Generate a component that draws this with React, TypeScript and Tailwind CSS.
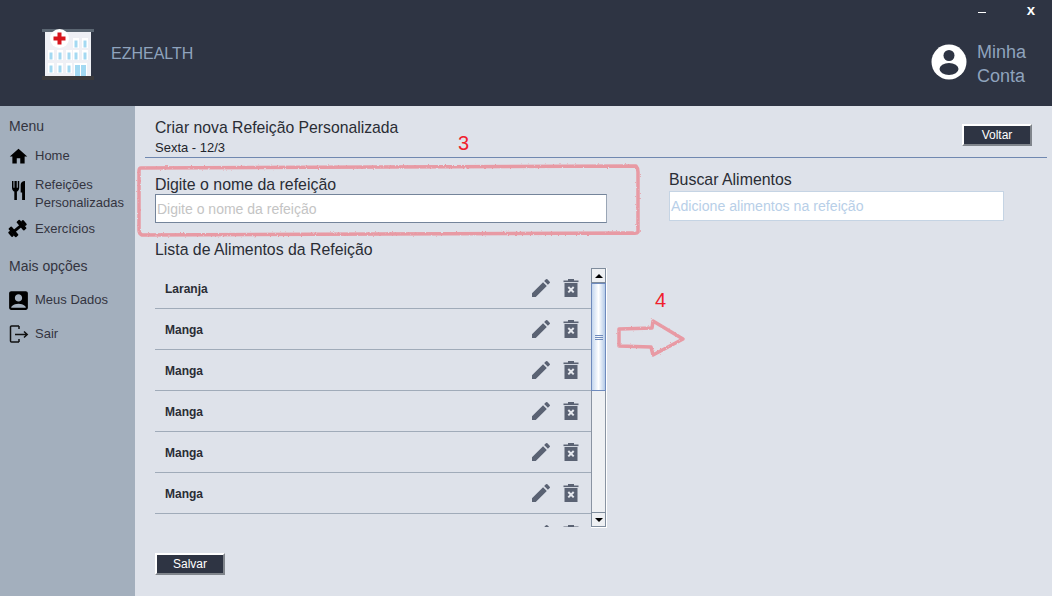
import { MdHome, MdEdit, MdAccountBox } from 'react-icons/md';

const ITEMS = ['Laranja', 'Manga', 'Manga', 'Manga', 'Manga', 'Manga', ''];

function HospitalLogo() {
  const windows = [
    [31, 10], [40, 10],
    [6, 22], [15, 22], [24, 22], [31, 22], [40, 22],
    [6, 35], [15, 35], [24, 35],
  ];
  return (
    <svg width="52" height="52" viewBox="0 0 52 52" className="shrink-0">
      <rect x="3" y="3" width="46" height="45" fill="#eff0f5" />
      <rect x="0" y="1" width="52" height="3" fill="#5b6672" />
      <rect x="0" y="48" width="52" height="4" fill="#3b3a3c" />
      {windows.map(([x, y], i) => (
        <g key={i}>
          <rect x={x} y={y} width="6" height="10" fill="#ffffff" />
          <rect x={x + 1.5} y={y + 2.5} width="3" height="7" fill="#a3d9f2" />
        </g>
      ))}
      <rect x="32" y="35" width="13" height="13" fill="#ffffff" />
      <rect x="33" y="37" width="11" height="11" fill="#a3d9f2" />
      <rect x="38" y="37" width="1" height="11" fill="#ffffff" />
      <circle cx="17.5" cy="10.5" r="9.5" fill="#ffffff" />
      <rect x="15.5" y="4.5" width="4" height="12" fill="#d8141c" />
      <rect x="11.5" y="8.5" width="12" height="4" fill="#d8141c" />
    </svg>
  );
}

function TrashX() {
  return (
    <svg width="16" height="18" viewBox="0 0 16 18" className="shrink-0">
      <rect x="0.5" y="1.5" width="15" height="1.6" fill="#5a6273" />
      <rect x="5" y="0" width="6" height="2" fill="#5a6273" />
      <path d="M1.5 4h13v14h-13z" fill="#5a6273" />
      <path d="M5.3 8l5.4 5.4M10.7 8l-5.4 5.4" stroke="#e6e9ef" strokeWidth="2" />
    </svg>
  );
}

function LogoutIcon() {
  return (
    <svg width="20" height="20" viewBox="0 0 20 20" fill="none" stroke="#111" strokeWidth="1.5" className="shrink-0">
      <path d="M10 2H2.5a1 1 0 0 0-1 1v14a1 1 0 0 0 1 1H10" />
      <path d="M10 2v3M10 15v3" />
      <path d="M6 10.5h12M15 7.5l3.2 3-3.2 3" />
    </svg>
  );
}

function ForkKnife() {
  return (
    <svg width="13" height="19" viewBox="3 2 18 20" preserveAspectRatio="none" className="-translate-y-[4px] shrink-0">
      <path
        d="M11 9H9.6V2H6.4v7H5V2H3v7c0 2.12 1.66 3.84 3.2 3.97V22h3.6v-9.03C11.34 12.84 13 11.12 13 9V2h-2v7zm4 -3v8h2v8H21V2c-3.3 0-6 1.8-6 4z"
        fill="#000"
      />
    </svg>
  );
}

function Dumbbell() {
  return (
    <svg width="21" height="21" viewBox="0 0 20 20" fill="#000" className="shrink-0 -translate-x-[1px] -translate-y-[1px]">
      <g transform="rotate(-40 10 10)">
        <rect x="0.5" y="7" width="3" height="6" rx="1" />
        <rect x="3" y="4.5" width="4" height="11" rx="1" />
        <rect x="6" y="8.6" width="8" height="2.8" />
        <rect x="13" y="4.5" width="4" height="11" rx="1" />
        <rect x="16.5" y="7" width="3" height="6" rx="1" />
      </g>
    </svg>
  );
}

function BevelButton({ label }: { label: string }) {
  return (
    <button className="w-[70px] h-[22px] bg-[#2e3443] border-2 border-t-white border-l-white border-r-[#80858c] border-b-[#80858c] text-white text-xs">
      {label}
    </button>
  );
}

function SideItem({ icon, children }: { icon: React.ReactNode; children: React.ReactNode }) {
  return (
    <div className="flex items-center gap-[7px] pl-[9px]">
      <div className="w-[19px] h-[18px] flex items-center justify-center shrink-0">{icon}</div>
      <span className="text-[13px] leading-[18px] text-[#33343f]">{children}</span>
    </div>
  );
}

function Scrollbar() {
  return (
    <div className="w-4 h-[260px] flex flex-col shrink-0 bg-[#eef0f3] border-r border-b border-white">
      <div className="h-[15px] border border-[#7f8c9c] bg-[#eef0f3] flex items-center justify-center">
        <div className="w-0 h-0 border-x-[4px] border-x-transparent border-b-[4px] border-b-black" />
      </div>
      <div className="h-[108px] border border-[#6f8bbd] bg-gradient-to-r from-[#c4d6ee] via-white to-[#b5cbe8] flex flex-col items-center justify-center gap-[1px]">
        <div className="w-2 h-px bg-[#6f8bbd]" />
        <div className="w-2 h-px bg-[#6f8bbd]" />
        <div className="w-2 h-px bg-[#6f8bbd]" />
      </div>
      <div className="flex-1 border-x border-[#8a94a2]" />
      <div className="h-[15px] border border-[#7f8c9c] bg-[#eef0f3] flex items-center justify-center">
        <div className="w-0 h-0 border-x-[4px] border-x-transparent border-t-[4px] border-t-black" />
      </div>
    </div>
  );
}

export default function App() {
  return (
    <div className="w-[1052px] h-[596px] overflow-hidden relative flex flex-col bg-[#dee2ea] font-['Liberation_Sans',Arial,sans-serif]">
      {/* Header */}
      <header className="h-[106px] bg-[#2e3443] shrink-0 flex flex-col">
        <div className="h-[20px] flex justify-end items-start text-white">
          <div className="w-2 h-px bg-white mt-3 mr-[41px]" />
          <span className="font-bold text-[15px] leading-[20px] mr-[17px]">x</span>
        </div>
        <div className="flex-1 flex items-start pl-[42px] pt-[8px]">
          <HospitalLogo />
          <span className="ml-[17px] mt-[16px] text-base leading-[20px] text-[#8fa3bd]">EZHEALTH</span>
          <div className="ml-auto mr-[26px] flex items-center gap-[10px] mt-[12px]">
            <svg width="36" height="36" viewBox="0 0 36 36" className="-mt-[4px]">
              <circle cx="18" cy="18" r="17.5" fill="#ffffff" />
              <circle cx="18" cy="11.5" r="5.5" fill="#2e3443" />
              <ellipse cx="18" cy="25" rx="9.5" ry="6" fill="#2e3443" />
            </svg>
            <span className="text-lg leading-6 text-[#8fa3bd]">Minha<br />Conta</span>
          </div>
        </div>
      </header>

      <div className="flex-1 flex min-h-0">
        {/* Sidebar */}
        <aside className="w-[135px] shrink-0 bg-[#a3afbd] pt-[12px]">
          <p className="pl-[9px] text-sm leading-4 text-[#33343f]">Menu</p>
          <div className="mt-[13px]"><SideItem icon={<MdHome size={21} color="#000" className="shrink-0" />}>Home</SideItem></div>
          <div className="mt-[11px]"><SideItem icon={<ForkKnife />}>Refeições<br />Personalizadas</SideItem></div>
          <div className="mt-[8px]"><SideItem icon={<Dumbbell />}>Exercícios</SideItem></div>
          <p className="pl-[9px] mt-[20px] text-sm leading-4 text-[#33343f]">Mais opções</p>
          <div className="mt-[17px]"><SideItem icon={<MdAccountBox size={25} color="#000" className="shrink-0" />}>Meus Dados</SideItem></div>
          <div className="mt-[16px]"><SideItem icon={<LogoutIcon />}>Sair</SideItem></div>
        </aside>

        {/* Main */}
        <main className="flex-1 min-w-0 pl-[10px] pr-[5px]">
          <div className="h-[52px] border-b border-[#7088b0] flex items-start justify-between pl-[10px] pr-[15px]">
            <div className="pt-[13px]">
              <h1 className="text-[15.75px] leading-[18px] font-normal text-[#2a2d35]">Criar nova Refeição Personalizada</h1>
              <p className="text-[13px] leading-[14px] mt-[4px] text-[#22242b]">Sexta - 12/3</p>
            </div>
            <div className="pt-[18px] flex"><BevelButton label="Voltar" /></div>
          </div>

          <div className="flex items-start pl-[10px] pt-[14px]">
            <div className="w-[452px] shrink-0">
              <label className="block text-[15.9px] leading-[20px] mt-[3px] text-[#2a2d35]">Digite o nome da refeição</label>
              <div className="h-[29px] bg-white border border-t-[#74849a] border-l-[#74849a] border-r-[#9aa6b6] border-b-[#74849a] flex items-center px-[1px] text-sm text-[#c4c4c4] mt-[-1px]">
                Digite o nome da refeição
              </div>
              <p className="text-[15.85px] leading-[20px] mt-[17px] text-[#2a2d35]">Lista de Alimentos da Refeição</p>
              <div className="flex items-start mt-[8px]">
                <div className="flex-1 h-[259px] overflow-hidden">
                  {ITEMS.map((item, i) => (
                    <div key={i} className="h-[41px] border-b border-[#a0abb9] flex items-center pl-[10px] pr-[12px]">
                      <span className="text-xs font-bold text-[#2a2d35] mt-[2px]">{item}</span>
                      <div className="ml-auto flex items-center gap-[10px]">
                        <MdEdit size={24} color="#5a6273" />
                        <TrashX />
                      </div>
                    </div>
                  ))}
                </div>
                <Scrollbar />
              </div>
              <div className="mt-[25px] flex"><BevelButton label="Salvar" /></div>
            </div>
            <div className="w-[335px] ml-[62px] -mt-[2px]">
              <p className="text-[15.9px] leading-[20px] text-[#2a2d35]">Buscar Alimentos</p>
              <div className="h-[30px] bg-white border border-[#c5d4e4] flex items-center px-[1px] pt-[1px] text-[14.15px] text-[#b8cfe8] mt-[1px]">
                Adicione alimentos na refeição
              </div>
            </div>
          </div>
        </main>
      </div>

      {/* Hand-drawn annotations over the screenshot */}
      <svg width="1052" height="596" className="absolute inset-0 pointer-events-none" fill="none" stroke="#e89aa4" strokeWidth="3.5" strokeLinejoin="round">
        <filter id="rough" x="-5%" y="-5%" width="110%" height="110%">
          <feTurbulence type="fractalNoise" baseFrequency="0.6" numOctaves="2" seed="4" />
          <feDisplacementMap in="SourceGraphic" scale="2.5" />
        </filter>
        <g filter="url(#rough)">
          <path d="M141 168 L636 166 Q638 168 638 172 L638 232 Q637 234 632 233 L142 235 Q139 234 139 230 L139 171 Q139 168 141 168Z" />
          <path d="M619 329 L652 328 L653 321 L683 339 L653 355 L651 347 L619 346Z" />
        </g>
      </svg>
      <span className="absolute left-[458px] top-[131px] text-xl leading-6 text-[#f0202c]">3</span>
      <span className="absolute left-[655px] top-[288px] text-xl leading-6 text-[#f0202c]">4</span>
    </div>
  );
}
